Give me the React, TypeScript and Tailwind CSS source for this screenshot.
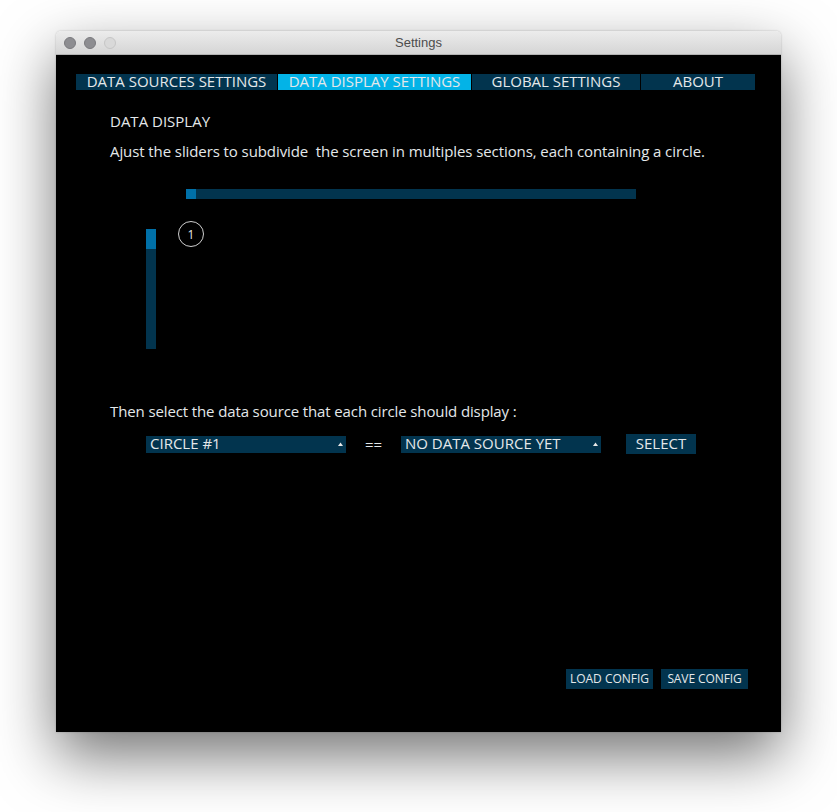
import React from "react";

const font = { fontFamily: '"Open Sans", "Noto Sans", sans-serif' };

function Tab({ label, w, active }: { label: string; w: string; active?: boolean }) {
  return (
    <div
      className={`${w} h-[16px] flex items-center justify-center text-[15px] leading-[16px] pb-[2px] text-[#e4e8ea] ${
        active ? "bg-[#03b3e7]" : "bg-[#02344e]"
      }`}
    >
      {label}
    </div>
  );
}

function Dropdown({ label }: { label: string }) {
  return (
    <div className="w-[200px] h-[17px] bg-[#02344e] flex items-center justify-between pl-[4px] pr-[3px] pb-[1px] text-[15px] leading-[17px] text-[#e4e8ea]">
      <span>{label}</span>
      <svg width="5" height="4" viewBox="0 0 5 4" className="mt-[1px]">
        <polygon points="0,4 5,4 2.5,0.5" fill="#e8e8e8" />
      </svg>
    </div>
  );
}

export default function App() {
  return (
    <div className="w-[837px] h-[812px] bg-white pl-[56px] pt-[31px]" style={font}>
      <div className="w-[725px] h-[701px] flex flex-col rounded-t-[5px] shadow-[0_24px_60px_rgba(0,0,0,0.55),0_0_2px_rgba(0,0,0,0.25)]">
        {/* Title bar */}
        <div className="relative h-[24px] flex items-center rounded-t-[5px] bg-gradient-to-b from-[#ececec] to-[#d5d5d5] border-b border-[#b3b3b3]">
          <div className="flex gap-[8px] pl-[8px]">
            <div className="w-[12px] h-[12px] rounded-full bg-[#8d8d91] border border-[#7a7a7e]" />
            <div className="w-[12px] h-[12px] rounded-full bg-[#8d8d91] border border-[#7a7a7e]" />
            <div className="w-[12px] h-[12px] rounded-full bg-[#d9d9d9] border border-[#c6c6c6]" />
          </div>
          <div
            className="absolute inset-0 flex items-center justify-center text-[13px] text-[#4d4d4d]"
            style={{ fontFamily: '"Liberation Sans", Arial, sans-serif' }}
          >
            Settings
          </div>
        </div>

        {/* Content */}
        <div className="flex-1 bg-black flex flex-col text-[#e4e8ea]">
          <div className="mt-[19px] ml-[20px] flex gap-[1px]">
            <Tab label="DATA SOURCES SETTINGS" w="w-[201px]" />
            <Tab label="DATA DISPLAY SETTINGS" w="w-[193px]" active />
            <Tab label="GLOBAL SETTINGS" w="w-[168px]" />
            <Tab label="ABOUT" w="w-[114px]" />
          </div>

          <div className="mt-[21px] ml-[54px] text-[15px] leading-[20px]">DATA DISPLAY</div>
          <div className="mt-[10px] ml-[54px] text-[15px] leading-[20px] tracking-[-0.09px] whitespace-pre">
            Ajust the sliders to subdivide  the screen in multiples sections, each containing a circle.
          </div>

          {/* horizontal slider */}
          <div className="mt-[28px] ml-[130px] w-[450px] h-[10px] bg-[#02344e] flex">
            <div className="w-[10px] h-[10px] bg-[#0070a8]" />
          </div>

          {/* vertical slider + circle */}
          <div className="mt-[22px] ml-[90px] flex items-start gap-[22px]">
            <div className="mt-[8px] w-[10px] h-[120px] bg-[#02344e] flex flex-col">
              <div className="w-[10px] h-[20px] bg-[#0070a8]" />
            </div>
            <div className="w-[26px] h-[26px] rounded-full border border-[#cfcfcf] flex items-center justify-center text-[12px] leading-none text-[#e8e8e8] pt-[1px]">
              1
            </div>
          </div>

          <div className="mt-[52px] ml-[54px] text-[15px] leading-[20px] tracking-[-0.12px]">
            Then select the data source that each circle should display :
          </div>

          <div className="mt-[13px] ml-[90px] flex items-center h-[20px]">
            <Dropdown label="CIRCLE #1" />
            <div className="w-[55px] text-center text-[15px] leading-[17px]">==</div>
            <Dropdown label="NO DATA SOURCE YET" />
            <div className="ml-[25px] w-[70px] h-[20px] bg-[#02344e] flex items-center justify-center pb-[2px] text-[15px] leading-[18px]">
              SELECT
            </div>
          </div>

          <div className="flex-1" />

          <div className="flex justify-end gap-[8px] pr-[33px] pb-[43px]">
            <div className="w-[87px] h-[20px] bg-[#02344e] flex items-center justify-center text-[12px] leading-[20px]">
              LOAD CONFIG
            </div>
            <div className="w-[87px] h-[20px] bg-[#02344e] flex items-center justify-center text-[12px] leading-[20px] tracking-[-0.1px]">
              SAVE CONFIG
            </div>
          </div>
        </div>
      </div>
    </div>
  );
}
